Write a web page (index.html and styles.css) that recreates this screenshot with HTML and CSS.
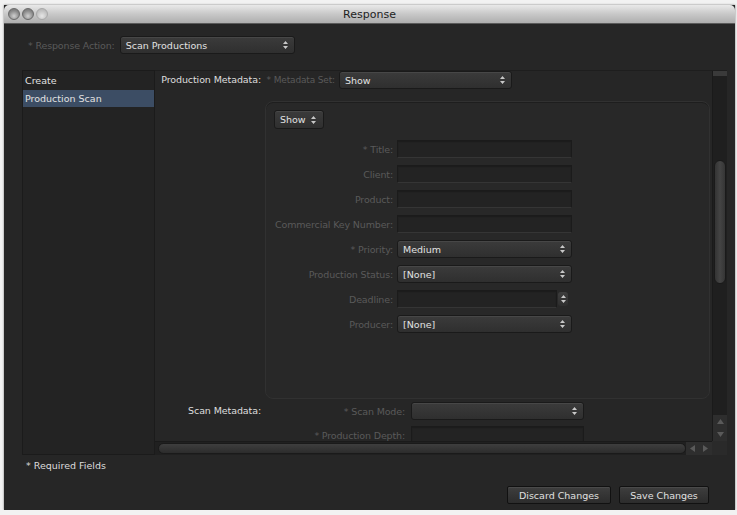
FILE: index.html
```html
<!DOCTYPE html>
<html lang="en">
  <head>
    <meta charset="UTF-8" />
    <meta name="viewport" content="width=device-width, initial-scale=1.0" />
    <title>Response</title>
    <link rel="stylesheet" href="styles.css">
  </head>
  <body>
    <div class="window">
      <div class="titlebar">
        <div class="lights">
          <span class="light"></span>
          <span class="light"></span>
          <span class="light off"></span>
        </div>
        <div class="title">Response</div>
      </div>

      <div class="body">
        <div class="action-row">
          <span class="dim">* Response Action:</span>
          <div class="select action">Scan Productions
            <svg class="updown" viewBox="0 0 5 8"><path d="M2.5 0L5 3H0z M2.5 8L0 5h5z"/></svg>
          </div>
        </div>

        <div class="main">
          <ul class="list">
            <li>Create</li>
            <li class="selected">Production Scan</li>
          </ul>

          <div class="scroller">
            <div class="viewport">
              <div class="section">
                <div class="section-label">Production Metadata:</div>
                <div class="section-body">
                  <div class="set-row">
                    <span class="dim set-label">* Metadata Set:</span>
                    <div class="select set">Show
                      <svg class="updown" viewBox="0 0 5 8"><path d="M2.5 0L5 3H0z M2.5 8L0 5h5z"/></svg>
                    </div>
                  </div>

                  <div class="panel">
                    <div class="select small">Show
                      <svg class="updown" viewBox="0 0 5 8"><path d="M2.5 0L5 3H0z M2.5 8L0 5h5z"/></svg>
                    </div>
                    <div class="form">
                      <div class="row"><span class="dim label">* Title:</span><div class="input"></div></div>
                      <div class="row"><span class="dim label">Client:</span><div class="input"></div></div>
                      <div class="row"><span class="dim label">Product:</span><div class="input"></div></div>
                      <div class="row"><span class="dim label">Commercial Key Number:</span><div class="input"></div></div>
                      <div class="row"><span class="dim label">* Priority:</span>
                        <div class="select field">Medium
                          <svg class="updown" viewBox="0 0 5 8"><path d="M2.5 0L5 3H0z M2.5 8L0 5h5z"/></svg>
                        </div>
                      </div>
                      <div class="row"><span class="dim label">Production Status:</span>
                        <div class="select field">[None]
                          <svg class="updown" viewBox="0 0 5 8"><path d="M2.5 0L5 3H0z M2.5 8L0 5h5z"/></svg>
                        </div>
                      </div>
                      <div class="row"><span class="dim label">Deadline:</span>
                        <div class="date">
                          <div class="input date-input"></div>
                          <div class="stepper">
                            <svg viewBox="0 0 5 10"><path d="M2.5 1L5 4H0z M2.5 9L0 6h5z"/></svg>
                          </div>
                        </div>
                      </div>
                      <div class="row"><span class="dim label">Producer:</span>
                        <div class="select field">[None]
                          <svg class="updown" viewBox="0 0 5 8"><path d="M2.5 0L5 3H0z M2.5 8L0 5h5z"/></svg>
                        </div>
                      </div>
                    </div>
                  </div>
                </div>
              </div>

              <div class="section scan">
                <div class="section-label">Scan Metadata:</div>
                <div class="scan-form">
                  <div class="row"><span class="dim label">* Scan Mode:</span>
                    <div class="select field">
                      <svg class="updown" viewBox="0 0 5 8"><path d="M2.5 0L5 3H0z M2.5 8L0 5h5z"/></svg>
                    </div>
                  </div>
                  <div class="row"><span class="dim label">* Production Depth:</span><div class="input"></div></div>
                </div>
              </div>
            </div>

            <div class="vbar">
              <div class="vtrack"><div class="vthumb"></div></div>
              <div class="arrow"><svg viewBox="0 0 7 5"><path d="M3.5 0L7 5H0z"/></svg></div>
              <div class="arrow"><svg viewBox="0 0 7 5"><path d="M3.5 5L0 0h7z"/></svg></div>
            </div>
            <div class="hbar">
              <div class="htrack"><div class="hthumb"></div></div>
              <div class="arrow"><svg viewBox="0 0 5 7"><path d="M0 3.5L5 0v7z"/></svg></div>
              <div class="arrow"><svg viewBox="0 0 5 7"><path d="M5 3.5L0 7V0z"/></svg></div>
            </div>
            <div class="corner"></div>
          </div>
        </div>

        <div class="required">* Required Fields</div>

        <div class="buttons">
          <button class="btn discard">Discard Changes</button>
          <button class="btn save">Save Changes</button>
        </div>
      </div>
    </div>
  </body>
</html>
```

FILE: styles.css
```css
* {
  margin: 0;
  padding: 0;
  box-sizing: border-box;
}

body {
  background-color: #f2f2f2;
  font-family: "DejaVu Sans", "Liberation Sans", sans-serif;
  font-size: 9.5px;
  color: #d6d6d6;
}

.window {
  margin: 5px 2px 0 4px;
  width: 731px;
  height: 505px;
  background-color: #262626;
  box-shadow: 0 0 2px rgba(0, 0, 0, 0.5);
}

/* barra de titulo */
.titlebar {
  height: 19px;
  display: flex;
  align-items: center;
  position: relative;
  border-radius: 5px 5px 0 0;
  background: linear-gradient(#e9e9e9, #c8c8c8 50%, #aeaeae);
  border-bottom: 1px solid #5a5a5a;
}

.lights {
  display: flex;
  gap: 2px;
  padding-left: 4px;
}

.light {
  width: 12px;
  height: 12px;
  border-radius: 50%;
  background: radial-gradient(circle at 50% 70%, #d0d0d0, #8a8a8a 60%, #6e6e6e);
  border: 1px solid #6a6a6a;
}

.light.off {
  background: radial-gradient(circle at 50% 70%, #e6e6e6, #c2c2c2 60%, #b0b0b0);
  border-color: #a8a8a8;
}

.title {
  position: absolute;
  left: 0;
  right: 0;
  text-align: center;
  font-size: 11px;
  color: #1e1e1e;
  pointer-events: none;
}

.body {
  height: 486px;
  padding: 12px 8px 6px 18px;
  display: flex;
  flex-direction: column;
}

.dim {
  color: #5a5a5a;
  font-size: 9.5px;
  letter-spacing: -0.15px;
  white-space: nowrap;
}

/* selects */
.select {
  height: 18px;
  display: flex;
  align-items: center;
  padding: 0 6px 0 5px;
  border-radius: 3px;
  background: linear-gradient(#3b3b3b, #2f2f2f);
  border: 1px solid #1a1a1a;
  box-shadow: inset 0 1px 0 #474747;
  color: #e2e2e2;
  white-space: nowrap;
}

.updown {
  width: 5px;
  height: 8px;
  margin-left: auto;
  fill: #c8c8c8;
}

.action-row {
  height: 18px;
  display: flex;
  align-items: center;
  gap: 5px;
  padding-left: 6px;
}

.select.action {
  width: 175px;
}

.main {
  margin-top: 16px;
  height: 385px;
  display: flex;
}

.list {
  width: 133px;
  list-style: none;
  background-color: #232323;
  border: 1px solid #1b1b1b;
  padding-top: 1px;
}

.list li {
  height: 17.5px;
  line-height: 17.5px;
  padding-left: 2px;
  color: #e2e2e2;
}

.list li.selected {
  background-color: #3c4d64;
}

/* area con barras de desplazamiento */
.scroller {
  flex: 1;
  display: grid;
  grid-template-columns: 1fr 15px;
  grid-template-rows: 1fr 14px;
  border-top: 1px solid #1e1e1e;
}

.viewport {
  overflow: hidden;
  background-color: #262626;
}

.section {
  display: flex;
}

.section-label {
  width: 110px;
  flex-shrink: 0;
  text-align: right;
  padding-right: 4px;
  line-height: 17px;
  color: #dedede;
  letter-spacing: -0.1px;
  white-space: nowrap;
}

.set-row {
  display: flex;
  align-items: center;
  gap: 4px;
  height: 18px;
}

.set-label {
  width: 70px;
  font-size: 9px;
  display: flex;
  justify-content: flex-end;
}

.select.set {
  width: 173px;
}

.panel {
  margin-top: 12px;
  width: 445px;
  height: 298px;
  border-radius: 8px;
  background-color: #282828;
  border: 1px solid #313131;
  box-shadow: inset 0 1px 0 #1e1e1e;
  padding: 8px;
}

.select.small {
  width: 50px;
  height: 19px;
  padding-right: 7px;
}

.form {
  margin-top: 11px;
  display: flex;
  flex-direction: column;
  gap: 7px;
}

.row {
  display: flex;
  align-items: center;
  height: 18px;
  gap: 4px;
}

.label {
  display: flex;
  justify-content: flex-end;
  flex-shrink: 0;
}

.form .label {
  width: 119px;
}

.input {
  width: 175px;
  height: 18px;
  background-color: #232323;
  border: 1px solid #1b1b1b;
  border-bottom-color: #353535;
  box-shadow: inset 0 1px 1px #1c1c1c;
}

.select.field {
  width: 175px;
}

.date {
  display: flex;
  align-items: center;
  gap: 1px;
}

.input.date-input {
  width: 160px;
}

.stepper {
  width: 10px;
  height: 14px;
  border-radius: 3px;
  background: linear-gradient(#3e3e3e, #2e2e2e);
  display: flex;
  align-items: center;
  justify-content: center;
}

.stepper svg {
  width: 5px;
  height: 10px;
  fill: #c8c8c8;
}

.section.scan {
  margin-top: 3px;
}

.scan-form {
  display: flex;
  flex-direction: column;
  gap: 6px;
}

.scan-form .row {
  gap: 6px;
}

.scan-form .label {
  width: 140px;
}

.scan-form .select.field,
.scan-form .input {
  width: 173px;
}

/* barras */
.vbar {
  display: flex;
  flex-direction: column;
  background-color: #202020;
  border-left: 1px solid #1a1a1a;
}

.vtrack {
  flex: 1;
  padding: 89px 1px 0 1px;
  background: linear-gradient(#3a3a3a 0, #3a3a3a 5px, #1f1f1f 5px);
}

.vthumb {
  height: 124px;
  border-radius: 6px;
  background: linear-gradient(90deg, #343434, #444, #353535);
  border: 1px solid #1a1a1a;
}

.arrow {
  height: 13px;
  display: flex;
  align-items: center;
  justify-content: center;
  background-color: #2e2e2e;
}

.arrow svg {
  width: 7px;
  height: 5px;
  fill: #5a5a5a;
}

.hbar {
  display: flex;
  background-color: #202020;
  border-top: 1px solid #1a1a1a;
}

.htrack {
  flex: 1;
  padding: 1px 0 1px 3px;
}

.hthumb {
  height: 100%;
  border-radius: 6px;
  background: linear-gradient(#3e3e3e, #333 60%, #2c2c2c);
  border: 1px solid #1a1a1a;
}

.hbar .arrow {
  width: 13px;
  height: auto;
}

.hbar .arrow svg {
  width: 5px;
  height: 7px;
}

.corner {
  background-color: #2a2a2a;
}

.required {
  margin-top: 5px;
  line-height: 12px;
  padding-left: 4px;
  color: #dcdcdc;
}

.buttons {
  margin-top: 14px;
  display: flex;
  justify-content: flex-end;
  gap: 8px;
  padding-right: 18px;
}

.btn {
  height: 18px;
  font-family: inherit;
  font-size: 9.5px;
  color: #e0e0e0;
  border-radius: 2px;
  border: 1px solid #111;
  background: linear-gradient(#3e3e3e, #2c2c2c);
  box-shadow: inset 0 1px 0 #4a4a4a;
}

.btn.discard {
  width: 104px;
}

.btn.save {
  width: 90px;
}
```
